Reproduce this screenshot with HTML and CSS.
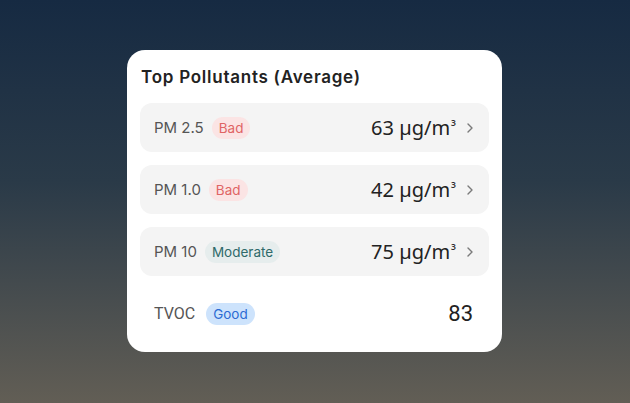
FILE: index.html
```html
<!DOCTYPE html>
<html>
<head>
    <link rel="stylesheet" href="styles.css">
</head>
<body>
    <div class="page">
        <div class="card">
            <h3 class="card-title">Top Pollutants (Average)</h3>

            <div class="row row-link">
                <span class="name">PM 2.5</span>
                <span class="badge bad">Bad</span>
                <span class="value">63 µg/m<span class="unit-sup">³</span></span>
                <svg class="chevron" width="8" height="10" viewBox="0 0 8 10"><path d="M2 1l4 4-4 4" fill="none" stroke="#7a7a7a" stroke-width="1.4" stroke-linecap="round" stroke-linejoin="round"/></svg>
            </div>

            <div class="row row-link">
                <span class="name">PM 1.0</span>
                <span class="badge bad">Bad</span>
                <span class="value">42 µg/m<span class="unit-sup">³</span></span>
                <svg class="chevron" width="8" height="10" viewBox="0 0 8 10"><path d="M2 1l4 4-4 4" fill="none" stroke="#7a7a7a" stroke-width="1.4" stroke-linecap="round" stroke-linejoin="round"/></svg>
            </div>

            <div class="row row-link">
                <span class="name">PM 10</span>
                <span class="badge moderate">Moderate</span>
                <span class="value">75 µg/m<span class="unit-sup">³</span></span>
                <svg class="chevron" width="8" height="10" viewBox="0 0 8 10"><path d="M2 1l4 4-4 4" fill="none" stroke="#7a7a7a" stroke-width="1.4" stroke-linecap="round" stroke-linejoin="round"/></svg>
            </div>

            <div class="row row-plain">
                <span class="name">TVOC</span>
                <span class="badge good">Good</span>
                <span class="value">83</span>
            </div>
        </div>
    </div>
</body>
</html>
```

FILE: styles.css
```css
body {
    margin: 0;
    font-family: Inter, "Noto Sans", sans-serif;
}

.page {
    width: 630px;
    height: 403px;
    box-sizing: border-box;
    padding: 50px 0 0 127px;
    background: linear-gradient(to bottom, #162a42, #2a3a48 45%, #625e55);
}

.card {
    width: 349px;
    background-color: #fff;
    border-radius: 18px;
    padding: 14px 13px 14px 13px;
    display: flex;
    flex-direction: column;
    gap: 13px;
}

.card-title {
    margin: 0 0 0 1px;
    padding-top: 1px;
    font-size: 17px;
    font-weight: 600;
    letter-spacing: 0.75px;
    color: #222;
    line-height: 25px;
}

.row {
    height: 49px;
    display: flex;
    align-items: center;
    padding: 0 15px 0 14px;
    border-radius: 12px;
}

.row-link {
    background-color: #f4f4f4;
}

.name {
    font-size: 15px;
    color: #555;
    margin-right: 8px;
}

.badge {
    font-size: 13.5px;
    padding: 3px 7px;
    border-radius: 11px;
    line-height: 16px;
}

.bad {
    background-color: #fbe4e4;
    color: #e06464;
}

.moderate {
    background-color: #e6eded;
    color: #2e6a6a;
}

.good {
    background-color: #cde3fc;
    color: #2b6bd3;
}

.value {
    margin-left: auto;
    font-family: "Noto Sans", sans-serif;
    font-size: 20px;
    color: #222;
}

.unit-sup {
    font-size: 14px;
    vertical-align: 3px;
    margin-left: 1px;
}

.chevron {
    margin-left: 10px;
}

.row-plain .name {
    font-family: Roboto, sans-serif;
    font-size: 16px;
    margin-right: 11px;
}

.row-plain .value {
    font-family: Roboto, sans-serif;
    font-size: 22px;
    margin-right: 1px;
}
```
